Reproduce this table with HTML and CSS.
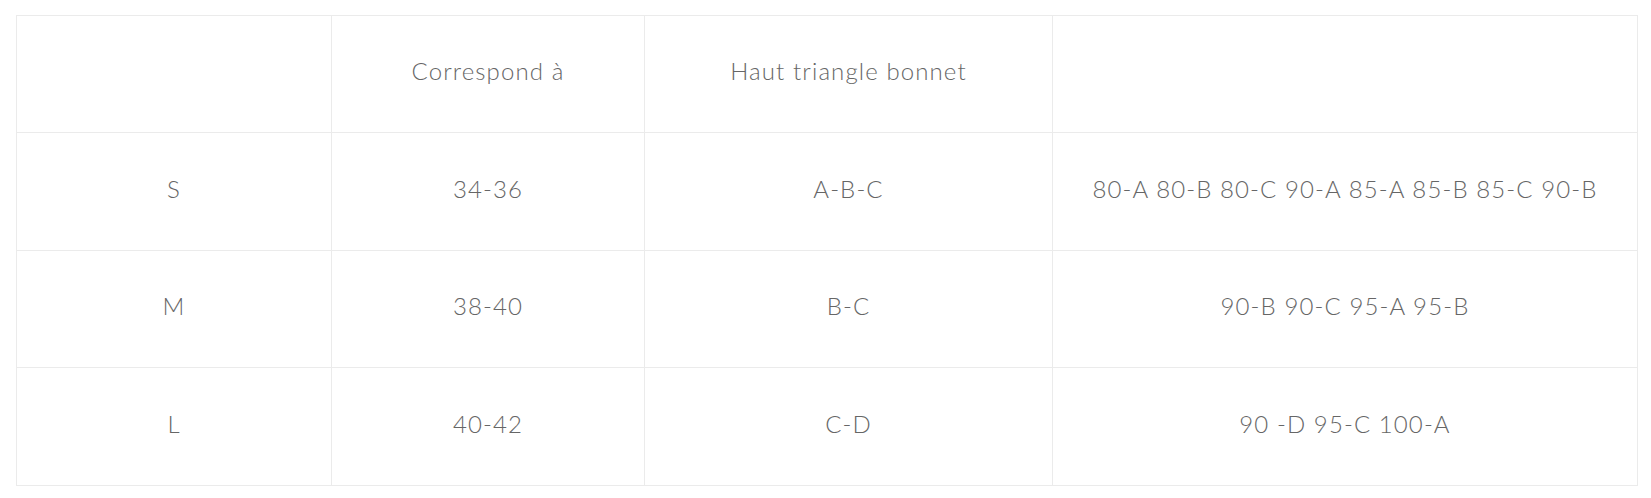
FILE: index.html
```html
<!DOCTYPE html>
<html lang="fr">
<head>
<meta charset="utf-8">
<title>Guide des tailles</title>
<link rel="stylesheet" href="styles.css">
</head>
<body>
<div class="page">
  <div class="size-table">
    <div class="cell"></div>
    <div class="cell">Correspond à</div>
    <div class="cell">Haut triangle bonnet</div>
    <div class="cell"></div>

    <div class="cell">S</div>
    <div class="cell">34-36</div>
    <div class="cell">A-B-C</div>
    <div class="cell">80-A 80-B 80-C 90-A 85-A 85-B 85-C 90-B</div>

    <div class="cell">M</div>
    <div class="cell">38-40</div>
    <div class="cell">B-C</div>
    <div class="cell">90-B 90-C 95-A 95-B</div>

    <div class="cell">L</div>
    <div class="cell">40-42</div>
    <div class="cell">C-D</div>
    <div class="cell">90 -D 95-C 100-A</div>
  </div>
</div>
</body>
</html>
```

FILE: styles.css
```css
html, body {
  margin: 0;
  padding: 0;
  background: #ffffff;
}

.page {
  padding: 15px 13px 0 16px;
}

.size-table {
  display: grid;
  grid-template-columns: 315px 313px 408px 585px;
  grid-template-rows: 117px 118px 117px 118px;
  border-top: 1px solid #ebebeb;
  border-left: 1px solid #ebebeb;
  width: max-content;
  font-family: Lato, "Liberation Sans", sans-serif;
  font-weight: 300;
  font-size: 24px;
  letter-spacing: 1.1px;
  color: #666666;
}

.cell {
  display: flex;
  align-items: center;
  justify-content: center;
  padding-bottom: 7px;
  border-right: 1px solid #ebebeb;
  border-bottom: 1px solid #ebebeb;
  white-space: nowrap;
}
```
